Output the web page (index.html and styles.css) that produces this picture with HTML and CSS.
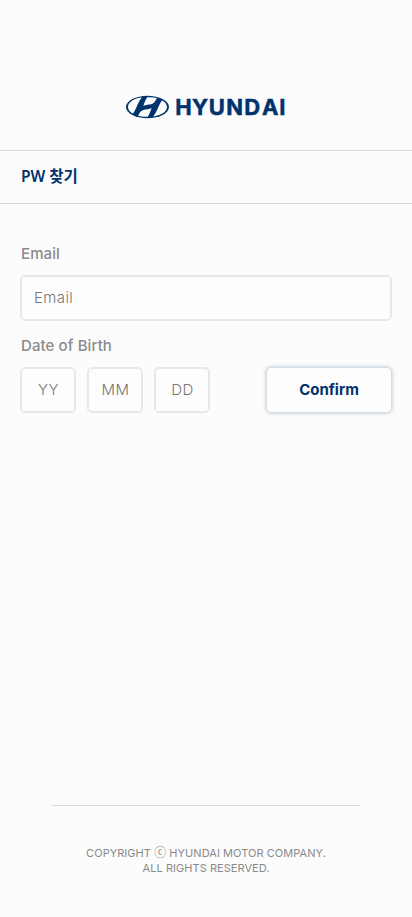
FILE: index.html
```html
<!DOCTYPE html>
<html lang="ko">
<head>
<meta charset="utf-8">
<meta name="viewport" content="width=device-width, initial-scale=1">
<title>PW 찾기</title>
<link rel="stylesheet" href="styles.css">
</head>
<body>
<div class="page">
  <header class="brand">
    <svg class="logo" width="164" height="24" viewBox="0 0 164 24">
      <ellipse cx="21.500" cy="12" rx="21.500" ry="11.200" fill="#00326c"/>
      <path fill="#fcfcfc" d="M15 2.600C7.500 3.800 2 7.400 2 12c0 2.500 1.600 4.700 4.300 6.300.5.300.8.200 1.100-.2C10.200 14.600 11.500 8 15.400 3.100c.3-.4.100-.6-.4-.5z"/>
      <path fill="#fcfcfc" d="M28 21.400c7.500-1.200 13-4.800 13-9.400 0-2.500-1.600-4.700-4.300-6.300-.5-.3-.8-.2-1.100.2-2.800 3.500-4.100 10.100-8 15-.3.400-.1.600.4.500z"/>
      <path fill="#fcfcfc" d="M21.300 2.300c3.900-.2 6.800.2 9.600 1-1.900 3.600-3.200 5.200-5.800 5.900-2.500.5-4.500.5-7.800 1.500 1.400-3.200 2.200-6.100 4-8.400z"/>
      <path fill="#fcfcfc" d="M21.700 21.700c-3.900.2-6.800-.2-9.600-1 1.900-3.600 3.200-5.200 5.800-5.900 2.500-.5 4.500-.5 7.800-1.500-1.400 3.200-2.200 6.100-4 8.400z"/>
      <text class="wordmark" y="19.700" x="49.300 66 82.800 100.300 118.300 135.900 153.200">HYUNDAI</text>
    </svg>
  </header>
  <h1 class="title">PW <span class="ko">찾기</span></h1>
  <form class="form">
    <div class="label">Email</div>
    <div class="field field-email">Email</div>
    <div class="label label-dob">Date of Birth</div>
    <div class="row">
      <div class="field part">YY</div>
      <div class="field part">MM</div>
      <div class="field part">DD</div>
      <button class="confirm" type="button">Confirm</button>
    </div>
  </form>
  <footer class="footer">
    <div>COPYRIGHT <span class="mark">ⓒ</span> HYUNDAI MOTOR COMPANY.</div>
    <div>ALL RIGHTS RESERVED.</div>
  </footer>
</div>
</body>
</html>
```
FILE: styles.css
```css
* { box-sizing: border-box; }
body {
  margin: 0;
  background: #fcfcfc;
  font-family: Inter, "Noto Sans CJK KR", sans-serif;
  color: #8a8a8a;
}
.page { height: 917px; display: flex; flex-direction: column; }
.brand { height: 150px; padding: 95px 0 0 126px; }
.logo { display: block; overflow: visible; }
.wordmark {
  font: 700 22px Inter, sans-serif;
  fill: #00326c;
  stroke: #00326c;
  stroke-width: 0.5px;
}
.title {
  margin: 0;
  height: 54px;
  padding-left: 21px;
  border: solid #d9d9d9;
  border-width: 1px 0;
  font: 600 15.5px/50px "Noto Sans", "Noto Sans CJK KR", sans-serif;
  color: #00326c;
}
.ko { font-size: 15.5px; font-weight: 700; line-height: 1; }
.form { padding: 40px 20px 0; }
.label {
  height: 20px;
  padding-left: 1px;
  margin-bottom: 11px;
  font-size: 15px;
  line-height: 20px;
  font-weight: 500;
  letter-spacing: 0.1px;
}
.label-dob { margin-top: 15px; }
.field {
  height: 46px;
  border: 1px solid #e8e8e8;
  border-radius: 5px;
  box-shadow: inset 0 0 0 1px #e8e8e8;
  background: #fdfdfd;
  font: 300 15px/44px Inter, sans-serif;
  color: #777;
}
.field-email { padding-left: 13px; letter-spacing: 0.4px; }
.row { display: flex; gap: 11px; }
.part { width: 56px; text-align: center; letter-spacing: 0.4px; padding-left: 1px; }
.confirm {
  width: 126px;
  height: 46px;
  margin-left: auto;
  padding: 0;
  border: 1px solid #d3dbe5;
  border-radius: 5px;
  background: #fdfdfd;
  box-shadow: 0 0 4px rgba(0, 50, 108, 0.25);
  font: 700 15px/42px Inter, sans-serif;
  color: #00326c;
}
.footer {
  height: 112px;
  margin: auto 52px 0 52px;
  padding-top: 40px;
  border-top: 1px solid #d9d9d9;
  font-size: 11px;
  line-height: 15px;
  letter-spacing: 0.05px;
  text-align: center;
}
.mark { font-size: 12px; line-height: 1; }
```
